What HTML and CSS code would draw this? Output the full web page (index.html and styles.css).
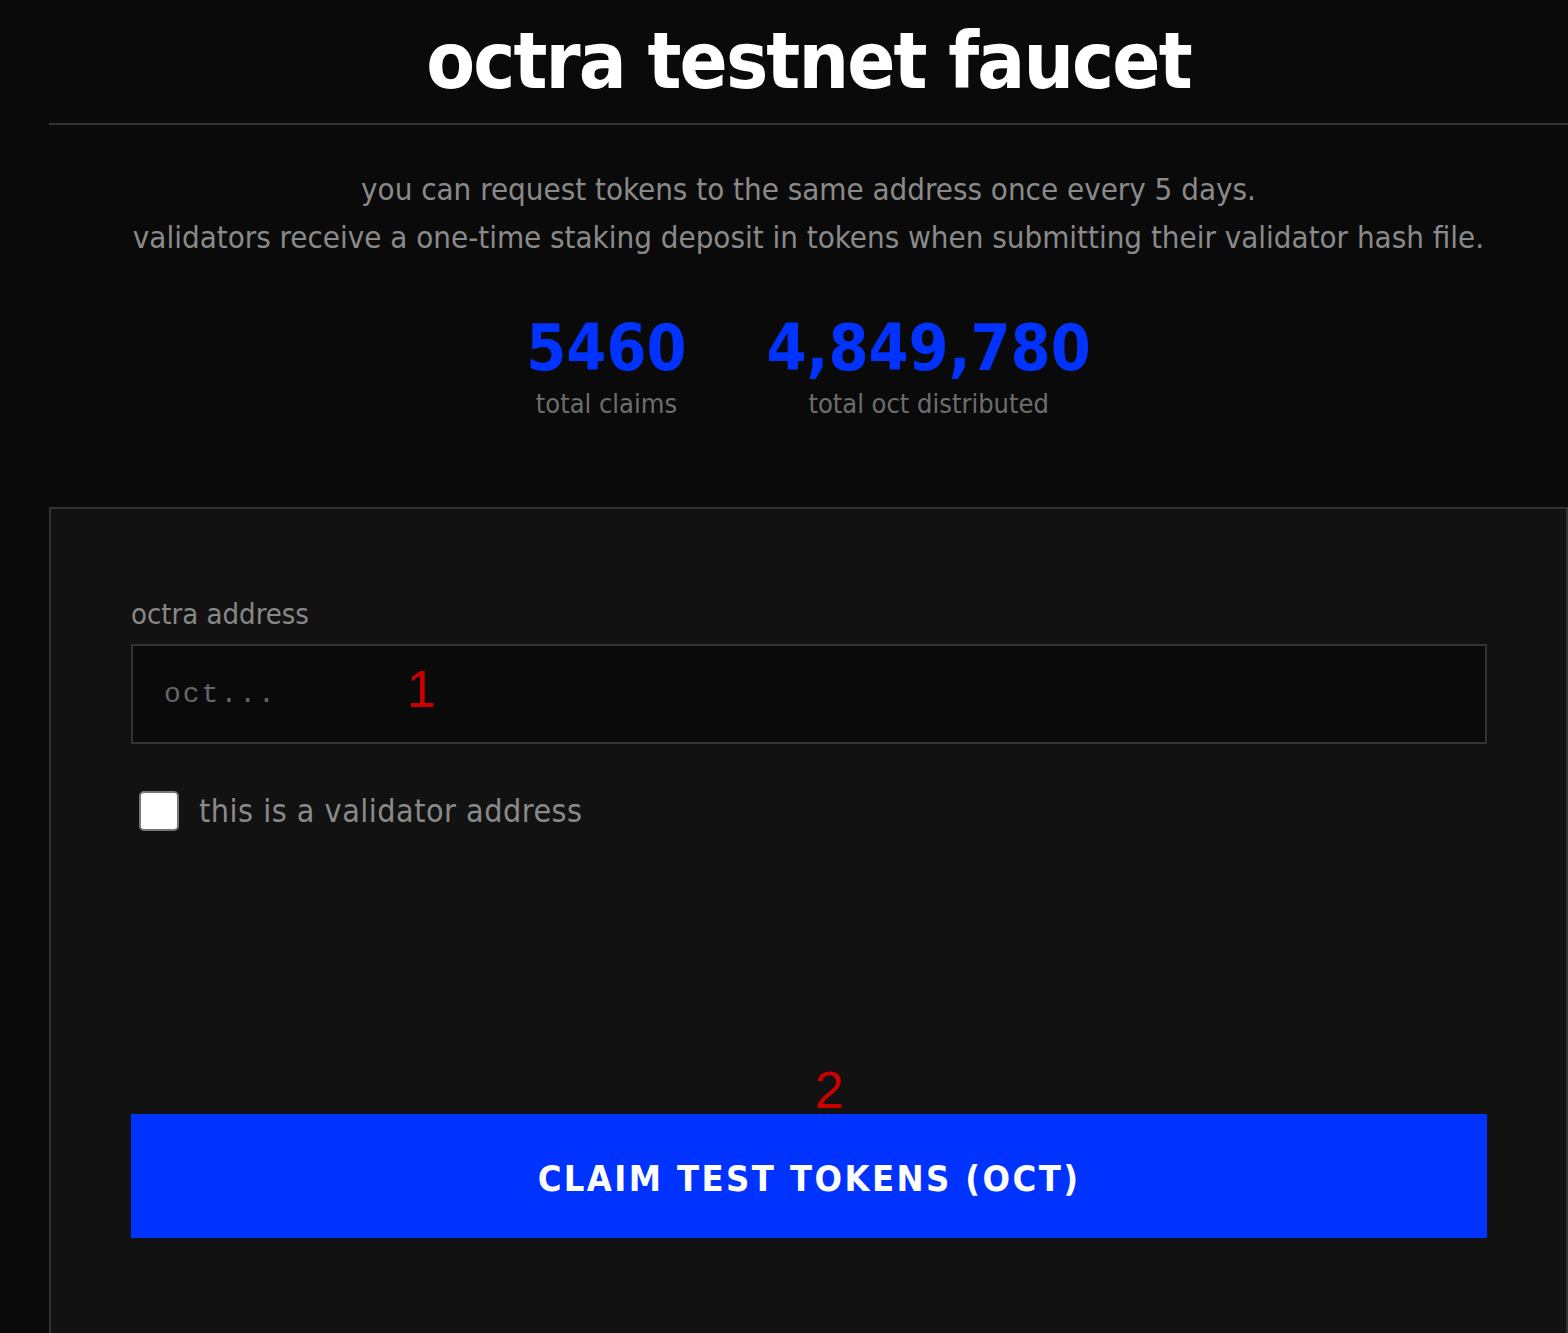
FILE: index.html
```html
<!DOCTYPE html>
<html lang="en">
<head>
<meta charset="utf-8">
<title>octra testnet faucet</title>
<link rel="stylesheet" href="styles.css">
</head>
<body>
<div class="page">
  <header class="header">
    <h1 class="title">octra testnet faucet</h1>
  </header>
  <div class="intro">
    <p class="intro-line">you can request tokens to the same address once every 5 days.</p>
    <p class="intro-line">validators receive a one-time staking deposit in tokens when submitting their validator hash file.</p>
  </div>
  <div class="stats">
    <div class="stat">
      <div class="stat-value">5460</div>
      <div class="stat-label">total claims</div>
    </div>
    <div class="stat">
      <div class="stat-value">4,849,780</div>
      <div class="stat-label">total oct distributed</div>
    </div>
  </div>
  <form class="card" onsubmit="return false;">
    <label class="field-label" for="addr">octra address</label>
    <div class="input-wrap">
      <input id="addr" class="addr-input" type="text" placeholder="oct...">
      <span class="marker marker-1">1</span>
    </div>
    <label class="check-row">
      <input type="checkbox" class="check">
      <span class="check-text">this is a validator address</span>
    </label>
    <div class="button-wrap">
      <span class="marker marker-2">2</span>
      <button class="claim-btn" type="submit">CLAIM TEST TOKENS (OCT)</button>
    </div>
  </form>
</div>
</body>
</html>
```
FILE: styles.css
```css
html, body {
  margin: 0;
  padding: 0;
  background: #0a0a0a;
  height: 100%;
  overflow: hidden;
}
body {
  font-family: "DejaVu Sans Condensed", "DejaVu Sans", sans-serif;
  font-stretch: condensed;
  color: #888;
}
.page {
  margin-left: 49px;
  width: 1519px;
}
.header {
  border-bottom: 2px solid #333;
  padding: 13px 0 14px;
}
.title {
  margin: 0;
  text-align: center;
  color: #fff;
  font-size: 79px;
  line-height: 96px;
  font-weight: 700;
  letter-spacing: -1.9px;
}
.intro {
  margin-top: 40px;
  text-align: center;
}
.intro-line {
  margin: 0;
  font-size: 31px;
  line-height: 48px;
  color: #8a8a8a;
}
.stats {
  display: flex;
  justify-content: center;
  gap: 80px;
  margin-top: 51px;
}
.stat {
  display: flex;
  flex-direction: column;
  align-items: center;
}
.stat-value {
  color: #0033ff;
  font-size: 64px;
  font-weight: 700;
  line-height: 72px;
}
.stat-label {
  margin-top: 3px;
  font-size: 27px;
  line-height: 34px;
  color: #6e6e6e;
}
.card {
  margin: 86px 0 0;
  background: #121212;
  border: 2px solid #333;
  border-bottom: none;
  padding: 88px 79px 200px 80px;
  display: flex;
  flex-direction: column;
}
.field-label {
  font-size: 29px;
  line-height: 34px;
  color: #888;
  margin-bottom: 13px;
}
.input-wrap {
  position: relative;
}
.addr-input {
  box-sizing: border-box;
  width: 100%;
  height: 100px;
  background: #0a0a0a;
  border: 2px solid #333;
  border-radius: 0;
  outline: none;
  padding: 0 31px;
  font-family: "Liberation Mono", monospace;
  font-size: 28px;
  letter-spacing: 2px;
  color: #ccc;
}
.addr-input::placeholder {
  color: #666;
}
.marker {
  position: absolute;
  color: #cc0000;
  font-family: "Liberation Sans", Arial, sans-serif;
  font-size: 52px;
  line-height: 1;
}
.marker-1 {
  left: 276px;
  top: 19px;
}
.marker-2 {
  left: 684px;
  top: -50px;
}
.check-row {
  display: flex;
  align-items: center;
  gap: 20px;
  margin-top: 47px;
  padding-left: 8px;
}
.check {
  appearance: none;
  -webkit-appearance: none;
  margin: 0;
  width: 40px;
  height: 40px;
  background: #fff;
  border: 2px solid #777;
  border-radius: 5px;
  box-sizing: border-box;
}
.check-text {
  font-size: 32px;
  line-height: 40px;
  color: #8a8a8a;
  letter-spacing: 0.5px;
}
.button-wrap {
  position: relative;
  margin-top: 283px;
}
.claim-btn {
  display: block;
  width: 100%;
  height: 124px;
  border: none;
  border-radius: 0;
  background: #0033ff;
  color: #fff;
  font-family: "DejaVu Sans Condensed", "DejaVu Sans", sans-serif;
  font-stretch: condensed;
  font-size: 36px;
  font-weight: 700;
  letter-spacing: 2.4px;
  padding-top: 6px;
}
```
